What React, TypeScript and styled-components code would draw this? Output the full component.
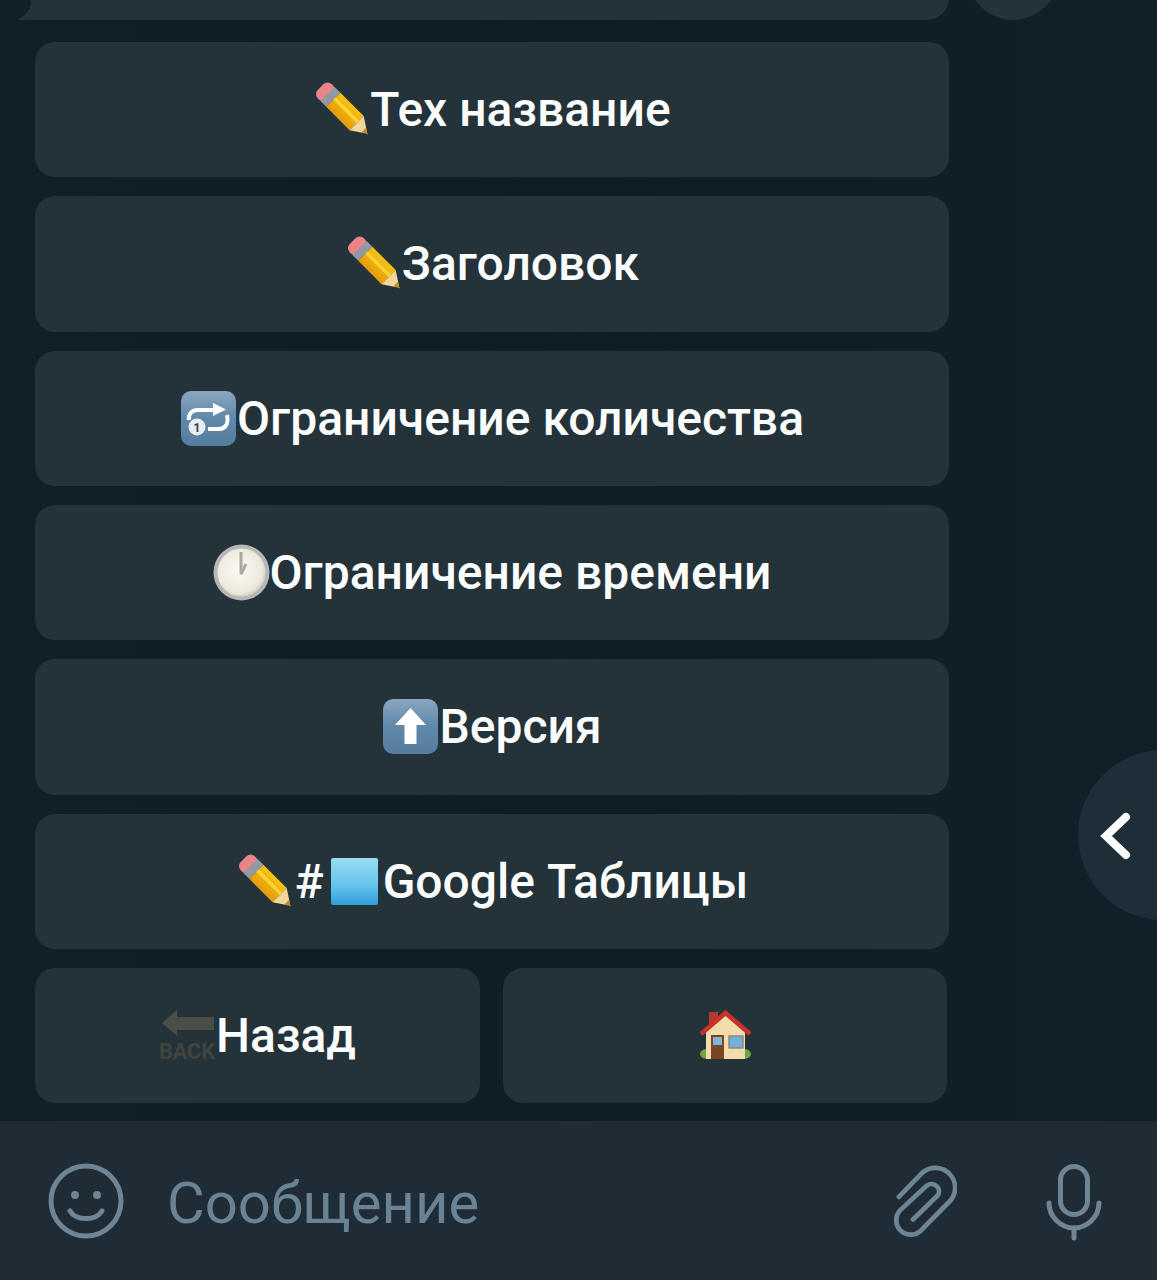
import React from "react";
import styled, { createGlobalStyle } from "styled-components";

const Global = createGlobalStyle`
  html, body { margin: 0; padding: 0; background: #101e26; }
  body { font-family: Roboto, "Liberation Sans", sans-serif; }
`;

const Screen = styled.div`
  position: relative;
  width: 1157px;
  height: 1280px;
  overflow: hidden;
  display: flex;
  flex-direction: column;
  background: linear-gradient(90deg, #111f28 0%, #0f1d25 50%, #111f28 100%);
`;

const Chat = styled.div`
  flex: 1;
  display: flex;
  flex-direction: column;
  gap: 22px;
`;

const MessageRow = styled.div`
  height: 20px;
  flex-shrink: 0;
  display: flex;
  align-items: flex-end;
  overflow: hidden;
  padding-left: 31px;
`;

const Bubble = styled.div`
  position: relative;
  width: 918px;
  height: 40px;
  flex-shrink: 0;
  background: #24323a;
  border-radius: 0 0 22px 0;
  &::before {
    content: "";
    position: absolute;
    left: -13px;
    bottom: 0;
    width: 14px;
    height: 20px;
    background: #24323a;
    clip-path: path("M14 0 C13 10 7 16 0 19 L1 20 L14 20 Z");
  }
`;

const ShareCircle = styled.div`
  width: 92px;
  height: 92px;
  flex-shrink: 0;
  margin-left: 18px;
  border-radius: 50%;
  background: #24323a;
`;

const Keyboard = styled.div`
  display: grid;
  grid-template-columns: 445px 444px;
  grid-auto-rows: 135.33px;
  column-gap: 23px;
  row-gap: 19px;
  padding-left: 35px;
`;

const KeyButton = styled.div<{ $wide?: boolean }>`
  grid-column: ${(p) => (p.$wide ? "1 / -1" : "auto")};
  width: ${(p) => (p.$wide ? "914px" : "auto")};
  display: flex;
  align-items: center;
  justify-content: center;
  border-radius: 20px;
  background: #24323a;
  color: #fbfdfd;
  font-size: 48px;
  font-weight: 500;
  white-space: nowrap;
`;

const Emoji = styled.svg`
  width: 57px;
  height: 57px;
  flex-shrink: 0;
  overflow: visible;
`;

const Hash = styled.span`
  margin: 0 2px;
`;

const InputBar = styled.div`
  height: 159px;
  flex-shrink: 0;
  display: flex;
  align-items: center;
  background: #1f2c36;
  padding: 0 50px 0 48px;
  color: #6d8595;
`;

const Placeholder = styled.div`
  flex: 1;
  margin-left: 43px;
  font-size: 58px;
  font-weight: 400;
  color: #6a8394;
  margin-top: 4px;
`;

const BarIcon = styled.svg<{ $w: number; $h: number; $gap?: number; $drop?: number }>`
  width: ${(p) => p.$w}px;
  height: ${(p) => p.$h}px;
  margin-left: ${(p) => p.$gap ?? 0}px;
  margin-top: ${(p) => p.$drop ?? 0}px;
  flex-shrink: 0;
  fill: none;
  stroke: currentColor;
  stroke-width: 5;
  stroke-linecap: round;
`;

const ScrollTab = styled.div`
  position: absolute;
  left: 1078px;
  top: 750px;
  width: 170px;
  height: 170px;
  border-radius: 50%;
  background: #1f2d38;
  display: flex;
  align-items: center;
  padding-left: 21px;
  box-sizing: border-box;
`;

const Chevron = styled.svg`
  width: 36px;
  height: 50px;
  fill: none;
  stroke: #fbfdfd;
  stroke-width: 8;
  stroke-linecap: round;
  stroke-linejoin: miter;
`;

const Pencil = () => (
  <Emoji viewBox="0 0 57 57">
    <defs>
      <linearGradient id="pb" x1="0" y1="0" x2="0" y2="1">
        <stop offset="0" stopColor="#f8c414" />
        <stop offset="1" stopColor="#e39a0a" />
      </linearGradient>
    </defs>
    <g transform="translate(12.5 11) rotate(45)">
      <rect x="-7" y="-10" width="14" height="20" rx="6" fill="#e98588" />
      <rect x="3" y="-10" width="8" height="20" fill="#8f9aa6" />
      <polygon points="11,-10 44,-10 44,10 11,10" fill="url(#pb)" />
      <rect x="11" y="-3.5" width="33" height="3.5" fill="#fbd436" />
      <polygon points="44,-10 57,-1.5 57,1.5 44,10" fill="#f3d69a" />
      <polygon points="54,-3 60,0 54,3" fill="#b98a2f" />
    </g>
  </Emoji>
);

const BlueTile = ({ id, children }: { id: string; children: React.ReactNode }) => (
  <Emoji viewBox="0 0 57 57">
    <defs>
      <linearGradient id={id} x1="0" y1="0" x2="0" y2="1">
        <stop offset="0" stopColor="#8aa6bf" />
        <stop offset="0.5" stopColor="#5f88aa" />
        <stop offset="1" stopColor="#557d9d" />
      </linearGradient>
    </defs>
    <rect x="1" y="1" width="55" height="55" rx="10" fill={`url(#${id})`} />
    {children}
  </Emoji>
);

const RepeatOne = () => (
  <BlueTile id="rep">
    <path d="M9 30 C8 24 12 20 18 20 L36 20" fill="none" stroke="#fff" strokeWidth="4" />
    <polygon points="33,13 46,19.5 33,26" fill="#fff" />
    <path d="M47 25 C49 34 45 39 39 39 L28 39" fill="none" stroke="#fff" strokeWidth="4" />
    <circle cx="17" cy="37" r="8.5" fill="#e8edf0" />
    <text x="17" y="41.5" textAnchor="middle" fontSize="12" fontWeight="700" fill="#33414d" fontFamily="Roboto, sans-serif">1</text>
  </BlueTile>
);

const UpArrow = () => (
  <BlueTile id="up">
    <polygon points="28.5,10 44,27 34.5,27 34.5,46 22.5,46 22.5,27 13,27" fill="#fff" />
  </BlueTile>
);

const Clock = () => (
  <Emoji viewBox="0 0 57 57">
    <defs>
      <radialGradient id="cf" cx="0.45" cy="0.45" r="0.6">
        <stop offset="0" stopColor="#fbfaf4" />
        <stop offset="0.8" stopColor="#ece8dc" />
        <stop offset="1" stopColor="#c9c6bd" />
      </radialGradient>
    </defs>
    <circle cx="28.5" cy="28.5" r="28" fill="#b6b8b8" />
    <circle cx="28.5" cy="28.5" r="24" fill="url(#cf)" />
    <path d="M28 8 L28 30 L33 20" fill="none" stroke="#a9a9a2" strokeWidth="3" />
  </Emoji>
);

const BlueSquare = () => (
  <Emoji viewBox="0 0 57 57">
    <defs>
      <linearGradient id="sq" x1="0" y1="0" x2="0" y2="1">
        <stop offset="0" stopColor="#9adcf2" />
        <stop offset="0.6" stopColor="#63c3ea" />
        <stop offset="1" stopColor="#2f9ddb" />
      </linearGradient>
    </defs>
    <rect x="5" y="5" width="47" height="47" rx="2" fill="url(#sq)" />
  </Emoji>
);

const Back = () => (
  <Emoji viewBox="0 0 57 57">
    <polygon points="3,16 18,3 18,10 55,10 55,23 18,23 18,29" fill="#4b4d48" />
    <text x="0" y="52" fontSize="22" fontWeight="700" fill="#41443f" textLength="56" lengthAdjust="spacingAndGlyphs" fontFamily="Roboto, sans-serif">BACK</text>
  </Emoji>
);

const House = () => (
  <Emoji viewBox="0 0 57 57">
    <rect x="12" y="5" width="9" height="14" fill="#b5382e" />
    <ellipse cx="10" cy="47" rx="7" ry="5" fill="#6ea83e" />
    <ellipse cx="47" cy="47" rx="7" ry="5" fill="#6ea83e" />
    <polygon points="9,24 28.5,8 48,24 48,52 9,52" fill="#f3dcab" />
    <path d="M4 27 L28.5 6 L53 27" fill="none" stroke="#c8322b" strokeWidth="4.5" />
    <rect x="14" y="28" width="13" height="24" fill="#7a4526" />
    <rect x="16" y="30" width="9" height="8" fill="#7fb6d8" />
    <rect x="32" y="29" width="14" height="12" fill="#6fb0dc" stroke="#8d8a7c" strokeWidth="1.5" />
  </Emoji>
);

export default function App() {
  return (
    <Screen>
      <Global />
      <Chat>
        <MessageRow>
          <Bubble />
          <ShareCircle />
        </MessageRow>
        <Keyboard>
          <KeyButton $wide><Pencil />Тех название</KeyButton>
          <KeyButton $wide><Pencil />Заголовок</KeyButton>
          <KeyButton $wide><RepeatOne />Ограничение количества</KeyButton>
          <KeyButton $wide><Clock />Ограничение времени</KeyButton>
          <KeyButton $wide><UpArrow />Версия</KeyButton>
          <KeyButton $wide><Pencil /><Hash>#</Hash><BlueSquare />Google Таблицы</KeyButton>
          <KeyButton><Back />Назад</KeyButton>
          <KeyButton><House /></KeyButton>
        </Keyboard>
      </Chat>
      <InputBar>
        <BarIcon $w={76} $h={76} viewBox="0 0 76 76">
          <circle cx="38" cy="38" r="35" />
          <circle cx="27" cy="32" r="4" fill="currentColor" stroke="none" />
          <circle cx="49" cy="32" r="4" fill="currentColor" stroke="none" />
          <path d="M22 48 C28 58 48 58 54 48" />
        </BarIcon>
        <Placeholder>Сообщение</Placeholder>
        <BarIcon $w={66} $h={80} $drop={4} viewBox="0 0 70 85">
          <path d="M8.3 36 L33 10.5 A21 21 0 0 1 61 42 L31 72.5 A15.5 15.5 0 0 1 9.3 50.5 L38 24 A8 8 0 0 1 50 34 L23.3 60" />
        </BarIcon>
        <BarIcon $w={66} $h={85} $gap={84} $drop={4} viewBox="0 0 66 85">
          <rect x="19.5" y="6.5" width="27" height="48" rx="13.5" />
          <path d="M8 43 C8 57 20 68 33 68 C46 68 58 57 58 43" />
          <path d="M33 68 L33 78" />
        </BarIcon>
      </InputBar>
      <ScrollTab>
        <Chevron viewBox="0 0 36 50">
          <path d="M27 7 L7 26 L27 45" />
        </Chevron>
      </ScrollTab>
    </Screen>
  );
}
